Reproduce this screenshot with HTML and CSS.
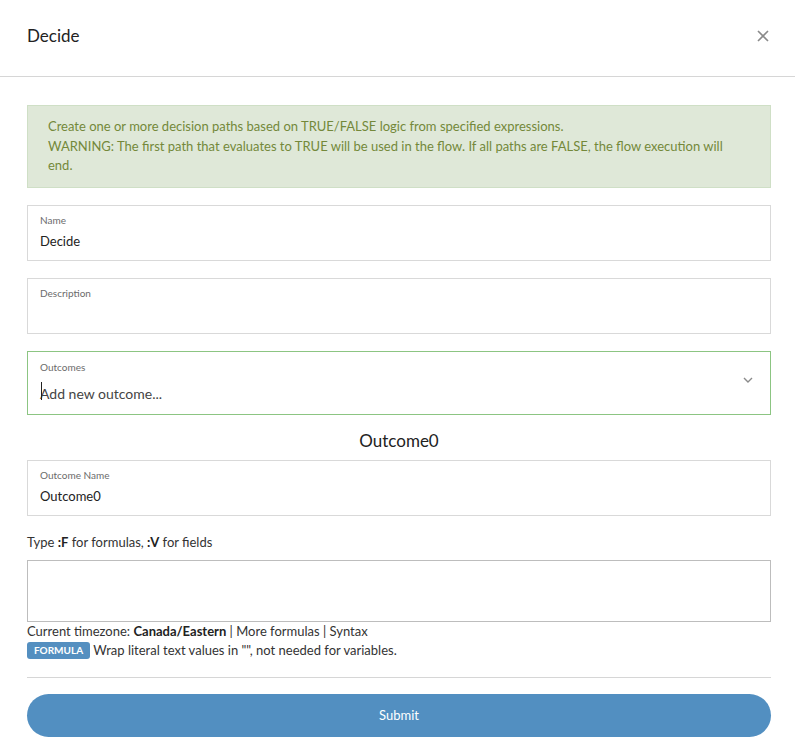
FILE: index.html
```html
<!DOCTYPE html>
<html>
<head>
<meta charset="utf-8">
<link rel="stylesheet" href="styles.css">
</head>
<body>
<div class="modal">
  <div class="modal-header">
    <h1 class="modal-title">Decide</h1>
    <button class="close" aria-label="Close">
      <svg width="12" height="12" viewBox="0 0 12 12"><path d="M1 1L11 11M11 1L1 11" stroke="#8a8a8a" stroke-width="1.6" fill="none"/></svg>
    </button>
  </div>
  <div class="modal-body">
    <div class="alert">
      Create one or more decision paths based on TRUE/FALSE logic from specified expressions.<br>
      WARNING: The first path that evaluates to TRUE will be used in the flow. If all paths are FALSE, the flow execution will end.
    </div>
    <div class="field">
      <div class="label">Name</div>
      <div class="value">Decide</div>
    </div>
    <div class="field">
      <div class="label">Description</div>
      <div class="value"></div>
    </div>
    <div class="field field-select">
      <div class="label">Outcomes</div>
      <div class="select-row">
        <div class="placeholder"><span class="caret"></span>Add new outcome...</div>
        <svg class="chevron" width="10" height="6" viewBox="0 0 10 6"><path d="M1 1L5 5L9 1" stroke="#8a8a8a" stroke-width="1.4" fill="none"/></svg>
      </div>
    </div>
    <h2 class="outcome-title">Outcome0</h2>
    <div class="field field-outcome">
      <div class="label">Outcome Name</div>
      <div class="value">Outcome0</div>
    </div>
    <p class="hint">Type <b>:F</b> for formulas, <b>:V</b> for fields</p>
    <div class="textarea"></div>
    <p class="meta">Current timezone: <b>Canada/Eastern</b> | More formulas | Syntax</p>
    <p class="meta badge-row"><span class="badge">FORMULA</span> Wrap literal text values in "", not needed for variables.</p>
    <hr class="divider">
    <button class="submit">Submit</button>
  </div>
</div>
</body>
</html>
```
FILE: styles.css
```css
html, body {
  margin: 0;
  padding: 0;
  background: #fff;
}
body {
  font-family: Lato, "Noto Sans", sans-serif;
  color: #222;
}
.modal {
  width: 795px;
}
.modal-header {
  height: 77px;
  border-bottom: 1px solid #d6d6d6;
  display: flex;
  align-items: center;
  justify-content: space-between;
  padding: 0 26px 0 27px;
  box-sizing: border-box;
}
.modal-title {
  margin: 0;
  font-size: 17px;
  font-weight: 400;
  color: #222;
  padding-bottom: 5px;
}
.close {
  border: 0;
  background: none;
  padding: 0;
  width: 12px;
  height: 12px;
  display: flex;
  margin-bottom: 5px;
}
.modal-body {
  padding: 28px 24px 0 27px;
}
.alert {
  background: #dfe8d8;
  border: 1px solid #cfdfc6;
  color: #74883a;
  font-size: 13px;
  line-height: 19.5px;
  padding: 11px 20px 11px 20px;
}
.field {
  margin-top: 17px;
  border: 1px solid #d9d9d9;
  height: 56px;
  box-sizing: border-box;
  padding: 7px 12px 0 12px;
}
.label {
  font-size: 10px;
  color: #6b6b6b;
  line-height: 14px;
}
.value {
  font-size: 13px;
  color: #222;
  line-height: 20px;
  margin-top: 4px;
}
.field-select {
  height: 64px;
  border-color: #8cc582;
  padding-top: 8px;
}
.select-row {
  display: flex;
  align-items: center;
  justify-content: space-between;
}
.placeholder {
  font-size: 14px;
  color: #444;
  line-height: 20px;
  margin-top: 10px;
  position: relative;
}
.caret {
  position: absolute;
  left: 1px;
  top: -2px;
  width: 1px;
  height: 18px;
  background: #222;
}
.chevron {
  margin-top: -17px;
  margin-right: 5px;
}
.outcome-title {
  margin: 12px 0 0 0;
  text-align: center;
  font-size: 17px;
  font-weight: 400;
  line-height: 28px;
  color: #222;
}
.field-outcome {
  margin-top: 5px;
}
.hint {
  font-size: 13px;
  line-height: 18px;
  margin: 17px 0 0 0;
  color: #333;
}
.hint b {
  color: #222;
}
.textarea {
  margin-top: 9px;
  height: 62px;
  border: 1px solid #bdbdbd;
  box-sizing: border-box;
}
.meta {
  margin: 0;
  font-size: 13px;
  line-height: 18px;
  color: #333;
}
.meta b {
  color: #222;
}
.badge-row {
  margin-top: 1px;
}
.badge {
  display: inline-block;
  background: #548fc0;
  color: #fff;
  font-size: 10px;
  font-weight: 700;
  padding: 0 7px;
  line-height: 17px;
  border-radius: 3px;
  vertical-align: 1px;
}
.divider {
  margin: 18px 0 0 0;
  border: 0;
  border-top: 1px solid #d6d6d6;
}
.submit {
  display: block;
  margin-top: 16px;
  width: 100%;
  height: 43px;
  border: 0;
  border-radius: 22px;
  background: #528fc1;
  color: #fff;
  font-family: Lato, "Noto Sans", sans-serif;
  font-size: 13px;
}
```
